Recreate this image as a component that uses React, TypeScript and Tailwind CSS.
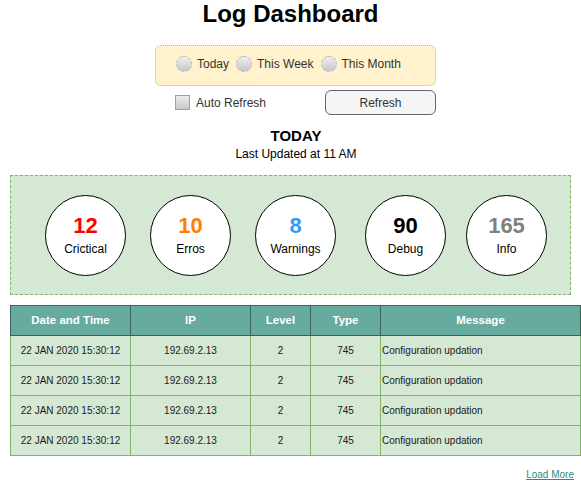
import React from 'react';

const stats = [
  { value: '12', label: 'Crictical', color: 'text-[#ff0000]', ml: 'ml-[34px]' },
  { value: '10', label: 'Erros', color: 'text-[#ff8000]', ml: 'ml-[24px]' },
  { value: '8', label: 'Warnings', color: 'text-[#3399ff]', ml: 'ml-[24px]' },
  { value: '90', label: 'Debug', color: 'text-black', ml: 'ml-[29px]' },
  { value: '165', label: 'Info', color: 'text-[#808080]', ml: 'ml-[20px]' },
];

const rows = Array.from({ length: 4 }, () => ({
  date: '22 JAN 2020 15:30:12',
  ip: '192.69.2.13',
  level: '2',
  type: '745',
  message: 'Configuration updation',
}));

const Radio: React.FC<{ label: string }> = ({ label }) => (
  <label className="flex items-center gap-[5px] text-[12px] text-[#333]">
    <span className="w-[16px] h-[16px] rounded-full border border-dashed border-[#bdbdbd] bg-gradient-to-b from-[#efefef] to-[#c6c6c6]" />
    {label}
  </label>
);

const App: React.FC = () => {
  return (
    <div className="w-[581px] h-[486px] bg-white text-black font-['Liberation_Sans',Arial,sans-serif] overflow-hidden">
      <h1 className="h-[28px] text-center text-[24px] font-bold leading-[28px]">Log Dashboard</h1>

      <div className="mt-[17px] ml-[155px] w-[281px] h-[41px] flex items-center gap-[7px] pl-[20px] pb-[4px] bg-[#fff2cc] border border-dotted border-[#d6b656] rounded-[6px]">
        <Radio label="Today" />
        <Radio label="This Week" />
        <Radio label="This Month" />
      </div>

      <div className="mt-[4px] h-[25px] flex items-center pl-[175px]">
        <label className="w-[150px] flex items-center gap-[6px] text-[12px] text-[#333]">
          <span className="w-[15px] h-[15px] border border-[#a0a0a0] bg-gradient-to-b from-[#ededed] to-[#c8c8c8]" />
          Auto Refresh
        </label>
        <button className="w-[111px] h-[25px] rounded-[6px] border border-[#666] bg-[#f5f5f5] text-[12px] text-[#333]">
          Refresh
        </button>
      </div>

      <div className="mt-[12px] pl-[11px] text-center">
        <div className="text-[15px] font-bold leading-[18px]">TODAY</div>
        <div className="mt-[2px] text-[12px] leading-[14px]">Last Updated at 11 AM</div>
      </div>

      <div className="mt-[14px] mx-[10px] h-[120px] flex items-center bg-[#d5e8d4] border border-dashed border-[#82b366]">
        {stats.map((s) => (
          <div
            key={s.label}
            className={`${s.ml} w-[81px] h-[81px] shrink-0 rounded-full bg-white border border-black flex flex-col items-center justify-center`}
          >
            <span className={`text-[22px] font-bold leading-[24px] ${s.color}`}>{s.value}</span>
            <span className="mt-[4px] text-[12px] leading-[14px]">{s.label}</span>
          </div>
        ))}
      </div>

      <table className="mt-[10px] ml-[10px] w-[570px] border-collapse table-fixed text-[10px]">
        <colgroup>
          <col className="w-[120px]" />
          <col className="w-[120px]" />
          <col className="w-[60px]" />
          <col className="w-[70px]" />
          <col className="w-[200px]" />
        </colgroup>
        <thead>
          <tr className="h-[30px] bg-[#67ab9f] text-white text-[11.5px] font-bold">
            <th className="border border-[#3b635c]">Date and Time</th>
            <th className="border border-[#3b635c]">IP</th>
            <th className="border border-[#3b635c]">Level</th>
            <th className="border border-[#3b635c]">Type</th>
            <th className="border border-[#3b635c]">Message</th>
          </tr>
        </thead>
        <tbody>
          {rows.map((r, i) => (
            <tr key={i} className="h-[30px] bg-[#d5e8d4] text-[#1a1a1a]">
              <td className="border border-[#82b366] text-center">{r.date}</td>
              <td className="border border-[#82b366] text-center">{r.ip}</td>
              <td className="border border-[#82b366] text-center">{r.level}</td>
              <td className="border border-[#82b366] text-center">{r.type}</td>
              <td className="border border-[#82b366] pl-[1px] text-left">{r.message}</td>
            </tr>
          ))}
        </tbody>
      </table>

      <div className="mt-[13px] pr-[7px] text-right text-[10px] leading-[12px]">
        <a href="#" className="text-[#2f8a78] underline">Load More</a>
      </div>
    </div>
  );
};

export default App;
